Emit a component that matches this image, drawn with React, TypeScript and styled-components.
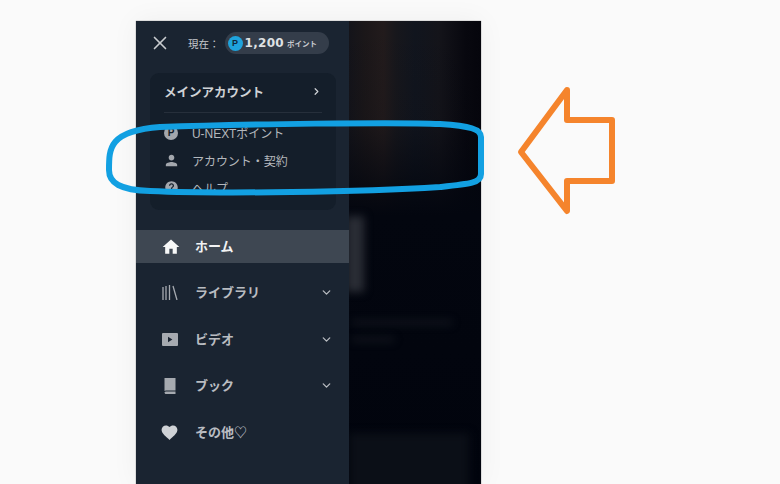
import React from 'react';
import styled, { createGlobalStyle } from 'styled-components';
import { MdHome, MdPerson, MdFavorite, MdHelp } from 'react-icons/md';
import { FiChevronDown, FiChevronRight, FiX } from 'react-icons/fi';

const GlobalStyle = createGlobalStyle`
  html, body {
    margin: 0;
    height: 100%;
    overflow: hidden;
    background: #fafafa;
    font-family: "Liberation Sans", "Noto Sans CJK JP", sans-serif;
  }
`;

const Page = styled.div`
  position: relative;
  width: 780px;
  height: 484px;
  padding: 21px 0 0 136px;
  box-sizing: border-box;
  overflow: hidden;
  background: #fafafa;
`;

const Phone = styled.div`
  display: flex;
  width: 345px;
  height: 463px;
  overflow: hidden;
  box-shadow: 0 0 1px #666, 0 0 26px rgba(0, 0, 0, 0.05);
`;

const Sidebar = styled.aside`
  width: 213px;
  flex-shrink: 0;
  display: flex;
  flex-direction: column;
  background: #1a2431;
  color: #c9ccd1;
`;

const TopBar = styled.div`
  display: flex;
  align-items: center;
  height: 44px;
  padding: 0 20px 0 13px;
`;

const CloseButton = styled.div`
  display: flex;
  color: #c9ccd0;
  margin-right: 17px;
`;

const CurrentLabel = styled.span`
  font-size: 10.5px;
  color: #c5c8cc;
  margin-right: 5px;
  white-space: nowrap;
`;

const PointPill = styled.div`
  display: flex;
  align-items: center;
  width: 104px;
  height: 22px;
  border-radius: 11px;
  background: #343d4a;
  padding-left: 3px;
  box-sizing: border-box;
  white-space: nowrap;
`;

const PointBadge = styled.span`
  width: 15px;
  height: 15px;
  border-radius: 50%;
  background: #1fa3dc;
  color: #10283a;
  font-size: 9px;
  font-weight: 700;
  display: flex;
  align-items: center;
  justify-content: center;
  margin-right: 2px;
`;

const PointValue = styled.span`
  font-family: "DejaVu Sans", sans-serif;
  font-size: 12px;
  font-weight: 700;
  color: #dfe1e4;
  letter-spacing: 0.3px;
`;

const PointUnit = styled.span`
  font-size: 7.5px;
  font-weight: 700;
  color: #c8cbd0;
  margin-left: 3px;
`;

const AccountCard = styled.section`
  margin: 8px 13px 0 14px;
  height: 137px;
  border-radius: 9px;
  background: #141e2a;
  padding: 0 14px;
  box-sizing: border-box;
  overflow: hidden;
`;

const AccountHeader = styled.div`
  display: flex;
  align-items: center;
  justify-content: space-between;
  height: 36px;
  padding: 0 0 3px 0;
  font-size: 12.5px;
  font-weight: 700;
  color: #cfd2d6;
  border-bottom: 1px solid #262f3b;
  margin-bottom: 6px;
`;

const AccountRow = styled.div`
  display: flex;
  align-items: center;
  height: 27.5px;
  font-size: 12px;
  letter-spacing: -0.05px;
  color: #b4b8bd;
`;

const RowIcon = styled.span`
  width: 28px;
  flex-shrink: 0;
  display: flex;
  color: #a3a7ad;
`;

const PointIcon = styled.span`
  width: 14px;
  height: 14px;
  border-radius: 50%;
  background: #a3a7ad;
  color: #141e2a;
  font-size: 10px;
  font-weight: 700;
  display: flex;
  align-items: center;
  justify-content: center;
`;

const Nav = styled.nav`
  display: flex;
  flex-direction: column;
  margin-top: 20px;
`;

const NavItem = styled.div<{ $active?: boolean }>`
  display: flex;
  align-items: center;
  height: ${({ $active }) => ($active ? '33px' : '46.6px')};
  margin-bottom: ${({ $active }) => ($active ? '6.5px' : '0')};
  padding: 0 16px 0 26px;
  background: ${({ $active }) => ($active ? '#3e4752' : 'transparent')};
  color: ${({ $active }) => ($active ? '#f2f3f4' : '#b9bcc1')};
  font-size: 13px;
  font-weight: 700;
`;

const NavIcon = styled.span<{ $active?: boolean }>`
  width: 33px;
  height: 20px;
  flex-shrink: 0;
  display: flex;
  align-items: center;
  color: ${({ $active }) => ($active ? '#f7f8f8' : '#a6aab0')};
`;

const NavLabel = styled.span`
  flex: 1;
  padding-bottom: 2px;
`;

const Backdrop = styled.div`
  position: relative;
  flex: 1;
  overflow: hidden;
  background:
    linear-gradient(180deg, rgba(3, 6, 14, 0) 0%, rgba(3, 6, 14, 0.1) 22%, #03060f 42%, #01040d 100%),
    linear-gradient(90deg, #14141a 0%, #1b1719 12%, #221b1c 26%, #17171c 36%, #11151e 50%, #14141a 68%, #08080f 88%, #05050c 100%);
`;

const BlurShape = styled.div<{ $left: number; $top: number; $width: number; $height: number; $color: string }>`
  position: absolute;
  left: ${({ $left }) => $left}px;
  top: ${({ $top }) => $top}px;
  width: ${({ $width }) => $width}px;
  height: ${({ $height }) => $height}px;
  background: ${({ $color }) => $color};
  filter: blur(4px);
`;

const Annotation = styled.svg`
  position: absolute;
  left: 0;
  top: 0;
`;

const LibraryIcon = () => (
  <svg width="16" height="15" viewBox="0 0 16 15" fill="none" stroke="currentColor" strokeWidth="1.3">
    <path d="M1 2v13M4 1v14M7.5 0v15M11 1l4 14" />
  </svg>
);

const VideoIcon = () => (
  <svg width="16" height="13" viewBox="0 0 16 13">
    <path fill="currentColor" d="M0 1a1 1 0 0 1 1-1h14a1 1 0 0 1 1 1v11a1 1 0 0 1-1 1H1a1 1 0 0 1-1-1z" />
    <path fill="#1a2431" d="M6 3.8v5.4l4.4-2.7z" />
  </svg>
);

const BookIcon = () => (
  <svg width="16" height="16" viewBox="0 0 16 16">
    <path fill="currentColor" d="M2.5 0h11v12.4H4c-.7 0-1.2.2-1.5.6zM2.5 14.2c.3-.4.9-.6 1.5-.6h9.5V16H4c-.8 0-1.5-.7-1.5-1.8z" />
  </svg>
);

const accountLinks = [
  { label: 'U-NEXTポイント', icon: <PointIcon>P</PointIcon> },
  { label: 'アカウント・契約', icon: <MdPerson size={17} style={{ marginLeft: -1 }} /> },
  { label: 'ヘルプ', icon: <MdHelp size={15} /> }
];

const navItems = [
  { label: 'ホーム', icon: <MdHome size={20} style={{ marginLeft: -1 }} />, active: true },
  { label: 'ライブラリ', icon: <LibraryIcon />, more: true },
  { label: 'ビデオ', icon: <VideoIcon />, more: true },
  { label: 'ブック', icon: <BookIcon />, more: true },
  { label: 'その他♡', icon: <MdFavorite size={19} style={{ marginLeft: -2, color: '#cfd2d6' }} /> }
];

const App: React.FC = () => (
  <>
    <GlobalStyle />
    <Page>
      <Phone>
        <Sidebar>
          <TopBar>
            <CloseButton>
              <FiX size={22} strokeWidth={1.8} />
            </CloseButton>
            <CurrentLabel>現在：</CurrentLabel>
            <PointPill>
              <PointBadge>P</PointBadge>
              <PointValue>1,200</PointValue>
              <PointUnit>ポイント</PointUnit>
            </PointPill>
          </TopBar>
          <AccountCard>
            <AccountHeader>
              メインアカウント
              <FiChevronRight size={11} strokeWidth={2.6} />
            </AccountHeader>
            {accountLinks.map((link) => (
              <AccountRow key={link.label}>
                <RowIcon>{link.icon}</RowIcon>
                {link.label}
              </AccountRow>
            ))}
          </AccountCard>
          <Nav>
            {navItems.map((item) => (
              <NavItem key={item.label} $active={item.active}>
                <NavIcon $active={item.active}>{item.icon}</NavIcon>
                <NavLabel>{item.label}</NavLabel>
                {item.more && <FiChevronDown size={13} strokeWidth={2.4} />}
              </NavItem>
            ))}
          </Nav>
        </Sidebar>
        <Backdrop>
          <BlurShape $left={-3} $top={195} $width={18} $height={76} $color="#2a2d35" />
          <BlurShape $left={3} $top={300} $width={100} $height={3} $color="#1d2028" />
          <BlurShape $left={3} $top={317} $width={42} $height={3} $color="#1d2028" />
          <BlurShape $left={0} $top={412} $width={120} $height={60} $color="#0b0f17" />
        </Backdrop>
      </Phone>
      <Annotation width="780" height="484" viewBox="0 0 780 484" fill="none">
        <path
          d="M160 127 C 240 124, 400 122, 440 124 C 470 126, 481 129, 481 137 L 481 174 C 481 183, 470 184, 440 187 C 360 192, 220 194, 150 191 C 120 190, 109 183, 109 170 C 109 148, 109 131, 160 127 Z"
          stroke="#12a0e2"
          strokeWidth="6"
        />
        <path
          d="M567 90 L521 152 L567 211 L567 181 L612 181 L612 120 L567 120 Z"
          stroke="#f5842c"
          strokeWidth="6"
          strokeLinejoin="round"
        />
      </Annotation>
    </Page>
  </>
);

export default App;
